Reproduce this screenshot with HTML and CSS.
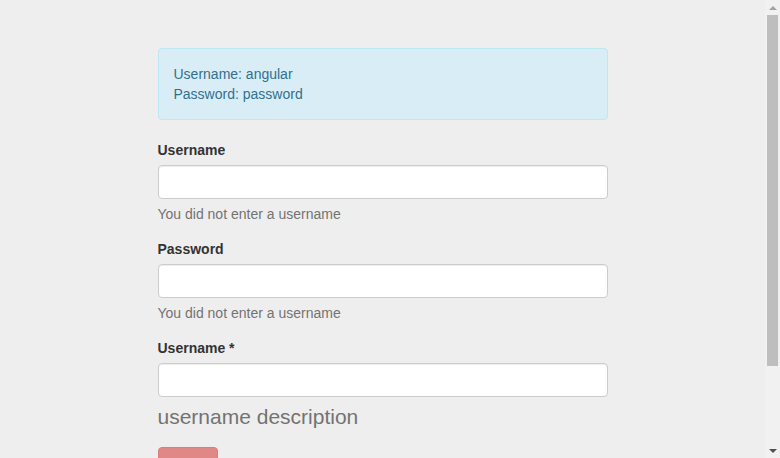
FILE: index.html
```html
<!DOCTYPE html>
<html lang="en">
<head>
<meta charset="utf-8">
<title>Login</title>
<link rel="stylesheet" href="styles.css">
</head>
<body>
<div class="container">
  <div class="alert">
    Username: angular<br>
    Password: password
  </div>
  <form class="login-form">
    <div class="form-group">
      <label class="control-label" for="u1">Username</label>
      <input class="form-control" id="u1" type="text">
      <p class="help-block">You did not enter a username</p>
    </div>
    <div class="form-group">
      <label class="control-label" for="p1">Password</label>
      <input class="form-control" id="p1" type="password">
      <p class="help-block">You did not enter a username</p>
    </div>
    <div class="form-group">
      <label class="control-label" for="u2">Username *</label>
      <input class="form-control" id="u2" type="text">
      <p class="help-block lead-help">username description</p>
    </div>
    <button class="btn btn-danger" type="submit" disabled>Login</button>
  </form>
</div>
<div class="scrollbar" aria-hidden="true">
  <div class="sb-arrow sb-up"></div>
  <div class="sb-track"><div class="sb-thumb"></div></div>
  <div class="sb-arrow sb-down"></div>
</div>
</body>
</html>
```

FILE: styles.css
```css
* { box-sizing: border-box; }
html, body { margin: 0; }
body {
  background: #eeeeee;
  font-family: "Liberation Sans", Arial, sans-serif;
  font-size: 14px;
  line-height: 1.42857143;
  color: #333333;
  padding-right: 15px;
}
.container {
  width: 450px;
  margin: 0 auto;
  padding: 48px 0 80px;
}
.alert {
  padding: 15px;
  margin-bottom: 20px;
  border: 1px solid #bce8f1;
  border-radius: 4px;
  background: #d9edf7;
  color: #31708f;
}
.login-form { margin: 0; }
.form-group { margin-bottom: 15px; }
.control-label {
  display: inline-block;
  margin-bottom: 5px;
  font-weight: bold;
}
.form-control {
  display: block;
  width: 100%;
  height: 34px;
  padding: 6px 12px;
  font: inherit;
  color: #555555;
  background: #ffffff;
  border: 1px solid #cccccc;
  border-radius: 4px;
  box-shadow: inset 0 1px 1px rgba(0, 0, 0, 0.075);
}
.help-block {
  display: block;
  margin: 5px 0 10px;
  color: #737373;
}
.lead-help {
  font-size: 21px;
}
.btn {
  display: inline-block;
  height: 34px;
  padding: 6px 12px;
  font: inherit;
  border: 1px solid transparent;
  border-radius: 4px;
}
.btn-danger {
  color: #ffffff;
  background: #d9534f;
  border-color: #d43f3a;
}
.btn[disabled] { opacity: 0.65; }

/* drawn browser scrollbar */
.scrollbar {
  position: fixed;
  top: 0;
  right: 0;
  width: 15px;
  height: 100vh;
  background: #f1f1f1;
  display: flex;
  flex-direction: column;
}
.sb-arrow {
  height: 15px;
  display: flex;
  align-items: center;
  justify-content: center;
}
.sb-arrow::before {
  content: "";
  width: 0;
  height: 0;
  border-left: 4px solid transparent;
  border-right: 4px solid transparent;
}
.sb-up::before { border-bottom: 4px solid #a3a3a3; }
.sb-down::before { border-top: 4px solid #505050; }
.sb-track {
  flex: 1;
  padding: 0 2px;
}
.sb-thumb {
  height: 351px;
  background: #bebebe;
}
```
